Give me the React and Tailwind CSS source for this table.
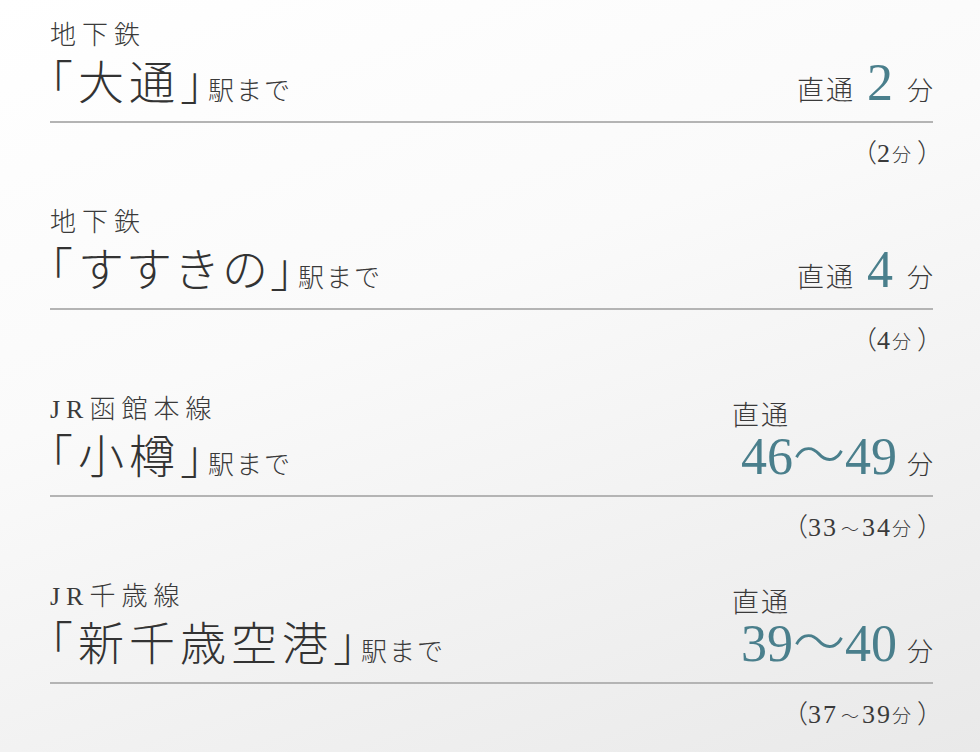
import React from "react";

const routes = [
  { line: "地下鉄", name: "大通", time: "2", note: "2", stacked: false, track: "tracking-[5px]" },
  { line: "地下鉄", name: "すすきの", time: "4", note: "4", stacked: false, track: "tracking-[2px]" },
  { line: "JR函館本線", name: "小樽", time: "46〜49", note: "33〜34", stacked: true, track: "tracking-[5px]" },
  { line: "JR千歳線", name: "新千歳空港", time: "39〜40", note: "37〜39", stacked: true, track: "tracking-[5px]" },
];

function Route({ route }) {
  const [a, b] = route.note.split("〜");
  return (
    <div className="flex flex-col">
      <div className="flex items-end justify-between border-b-2 border-[#b4b4b4] pb-[12px]">
        <div className="flex flex-col">
          <span className="text-[26px] leading-[30px] tracking-[6px] text-[#3a3a3a]">{route.line}</span>
          <div className="flex items-end mt-[8px]">
            <span className={`text-[46px] leading-[50px] text-[#333] ${route.track}`}>
              <span className="[font-feature-settings:'halt'] tracking-[5px]">「</span>
              {route.name}
              <span className="[font-feature-settings:'halt'] tracking-[5px]">」</span>
            </span>
            <span className="text-[26px] leading-[34px] tracking-[2px] text-[#3a3a3a]">駅まで</span>
          </div>
        </div>
        {route.stacked ? (
          <div className="flex flex-col items-start">
            <span className="text-[27px] leading-[32px] tracking-[2px] text-[#3a3a3a]">直通</span>
            <div className="flex items-baseline ml-[9px]">
              <span className="text-[52px] leading-[50px] text-[#4a7f8c]">{route.time}</span>
              <span className="text-[26px] leading-[34px] text-[#3a3a3a] ml-[10px]">分</span>
            </div>
          </div>
        ) : (
          <div className="flex items-baseline">
            <span className="text-[27px] leading-[34px] tracking-[2px] text-[#3a3a3a]">直通</span>
            <span className="text-[52px] leading-[50px] text-[#4a7f8c] ml-[12px]">{route.time}</span>
            <span className="text-[26px] leading-[34px] text-[#3a3a3a] ml-[14px]">分</span>
          </div>
        )}
      </div>
      <div className="flex justify-end mt-[16px] -mr-[10px]">
        <span className="text-[26px] leading-[30px] text-[#3a3a3a]">
          （<span className="tracking-[2px]">{a}</span>
          {b && (
            <>
              <span className="text-[18px] mx-[3px]">〜</span>
              <span className="tracking-[2px]">{b}</span>
            </>
          )}
          <span className="text-[19px] mr-[6px]">分</span>）
        </span>
      </div>
    </div>
  );
}

export default function App() {
  return (
    <div
      className="w-[980px] h-[752px] overflow-hidden bg-[linear-gradient(160deg,#ffffff_0%,#fafafa_40%,#f0f0f0_75%,#e9e9e9_100%)] pl-[50px] pr-[47px] pt-[21px] flex flex-col gap-[37px] font-light"
      style={{ fontFamily: '"Liberation Serif", "Noto Sans CJK JP", serif' }}
    >
      {routes.map((r) => (
        <Route key={r.name} route={r} />
      ))}
    </div>
  );
}
